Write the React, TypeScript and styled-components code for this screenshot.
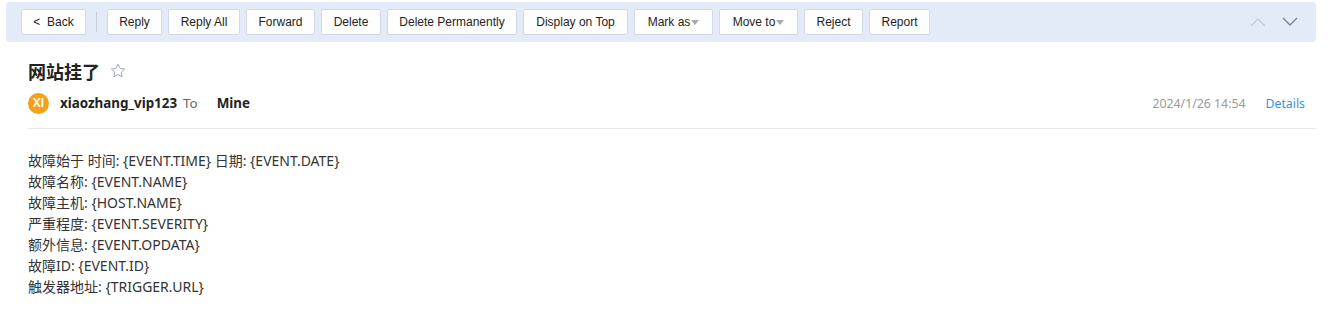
import styled, { createGlobalStyle } from 'styled-components';

const GlobalStyle = createGlobalStyle`
  body {
    margin: 0;
    background: #fff;
    font-family: "Noto Sans", "Noto Sans CJK SC", sans-serif;
    color: #333;
  }
`;

const Page = styled.div`
  padding: 2px 26px 0 6px;
`;

const Toolbar = styled.div`
  display: flex;
  align-items: center;
  height: 40px;
  padding: 0 15px;
  background: #e3ebf8;
  border-radius: 4px;
`;

const Button = styled.button<{ $w: number }>`
  display: flex;
  align-items: center;
  justify-content: center;
  width: ${p => p.$w}px;
  height: 26px;
  padding: 0;
  margin-right: 6px;
  background: #fff;
  border: 1px solid #d3d9e2;
  border-radius: 2px;
  font-family: "Liberation Sans", Arial, sans-serif;
  font-size: 12px;
  color: #222;
  cursor: pointer;
`;

const Caret = styled.span`
  width: 0;
  height: 0;
  margin-left: 1px;
  margin-top: 1px;
  border-left: 4px solid transparent;
  border-right: 4px solid transparent;
  border-top: 5px solid #aaa;
`;

const Separator = styled.div`
  width: 1px;
  height: 20px;
  background: #c9cfd8;
  margin: 0 10px 0 4px;
`;

const Nav = styled.div`
  margin-left: auto;
  display: flex;
  gap: 16px;
  padding-right: 3px;
`;

const Content = styled.div`
  padding-left: 22px;
`;

const TitleRow = styled.div`
  display: flex;
  align-items: center;
  gap: 9px;
  margin-top: 18px;
  height: 22px;
`;

const Title = styled.h1`
  margin: 0;
  font-size: 18px;
  font-weight: 700;
  color: #222;
`;

const SenderRow = styled.div`
  display: flex;
  align-items: center;
  height: 22px;
  margin-top: 10px;
  padding-right: 11px;
  font-size: 13.4px;
`;

const Avatar = styled.div`
  width: 21px;
  height: 21px;
  border-radius: 50%;
  background: #f5a015;
  color: #fff;
  font-family: "Liberation Sans", Arial, sans-serif;
  font-weight: 700;
  font-size: 12px;
  display: flex;
  align-items: center;
  justify-content: center;
  margin-right: 11px;
`;

const Strong = styled.span`
  font-weight: 700;
  color: #222;
`;

const Muted = styled.span`
  color: #666;
  margin: 0 19px 0 6px;
`;

const Date = styled.span`
  margin-left: auto;
  font-size: 12.3px;
  color: #999;
`;

const DetailsLink = styled.a`
  margin-left: 20px;
  font-size: 12.3px;
  color: #3d8ee8;
  text-decoration: none;
`;

const Divider = styled.div`
  height: 1px;
  background: #e8e8e8;
  margin-top: 14px;
`;

const Body = styled.div`
  margin-top: 21px;
  font-size: 14px;
  line-height: 21px;
  color: #333;
`;

const Chevron = ({ up, color }: { up?: boolean; color: string }) => (
  <svg width="16" height="10" viewBox="0 0 16 10">
    <path d={up ? 'M1 9 L8 2 L15 9' : 'M1 1 L8 8 L15 1'} fill="none" stroke={color} strokeWidth="1.4" />
  </svg>
);

const actions: [string, number][] = [
  ['Reply', 55],
  ['Reply All', 72],
  ['Forward', 69],
  ['Delete', 60],
  ['Delete Permanently', 130],
  ['Display on Top', 105],
];

const lines = [
  '故障始于 时间: {EVENT.TIME} 日期: {EVENT.DATE}',
  '故障名称: {EVENT.NAME}',
  '故障主机: {HOST.NAME}',
  '严重程度: {EVENT.SEVERITY}',
  '额外信息: {EVENT.OPDATA}',
  '故障ID: {EVENT.ID}',
  '触发器地址: {TRIGGER.URL}',
];

export default function App() {
  return (
    <>
      <GlobalStyle />
      <Page>
        <Toolbar>
          <Button $w={65}>&lt;&nbsp;&nbsp;Back</Button>
          <Separator />
          {actions.map(([label, w]) => (
            <Button key={label} $w={w}>{label}</Button>
          ))}
          <Button $w={79}>Mark as<Caret /></Button>
          <Button $w={79}>Move to<Caret /></Button>
          <Button $w={59}>Reject</Button>
          <Button $w={61}>Report</Button>
          <Nav>
            <Chevron up color="#c8ccd2" />
            <Chevron color="#7d8590" />
          </Nav>
        </Toolbar>
        <Content>
          <TitleRow>
            <Title>网站挂了</Title>
            <svg width="18" height="18" viewBox="0 0 24 24">
              <path
                d="M12 3 L14.7 8.6 L20.8 9.4 L16.4 13.6 L17.5 19.7 L12 16.8 L6.5 19.7 L7.6 13.6 L3.2 9.4 L9.3 8.6 Z"
                fill="none"
                stroke="#9aa4b4"
                strokeWidth="1.3"
                strokeLinejoin="round"
              />
            </svg>
          </TitleRow>
          <SenderRow>
            <Avatar>XI</Avatar>
            <Strong>xiaozhang_vip123</Strong>
            <Muted>To</Muted>
            <Strong>Mine</Strong>
            <Date>2024/1/26 14:54</Date>
            <DetailsLink href="#">Details</DetailsLink>
          </SenderRow>
          <Divider />
          <Body>
            {lines.map(l => (
              <div key={l}>{l}</div>
            ))}
          </Body>
        </Content>
      </Page>
    </>
  );
}
